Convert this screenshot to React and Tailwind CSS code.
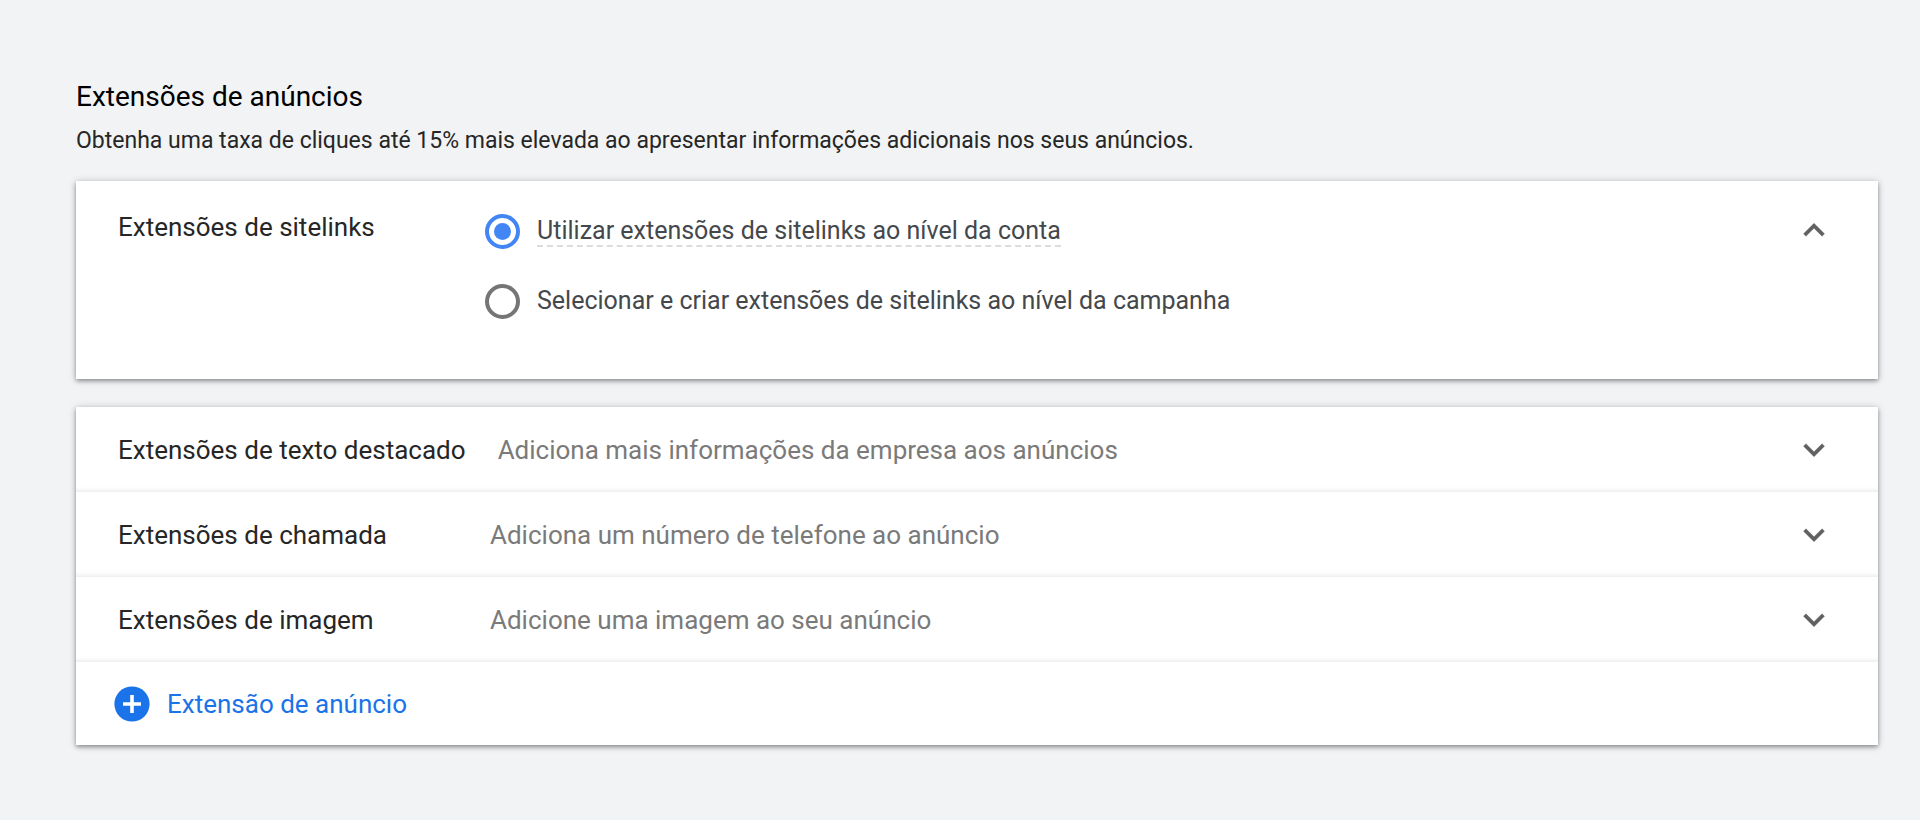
// src/App.jsx
import { useState } from 'react';

const SITELINK_OPTIONS = [
  { id: 'account', label: 'Utilizar extensões de sitelinks ao nível da conta', hint: true },
  { id: 'campaign', label: 'Selecionar e criar extensões de sitelinks ao nível da campanha', hint: false },
];

const EXTENSIONS = [
  { id: 'callout', title: 'Extensões de texto destacado', summary: 'Adiciona mais informações da empresa aos anúncios' },
  { id: 'call', title: 'Extensões de chamada', summary: 'Adiciona um número de telefone ao anúncio' },
  { id: 'image', title: 'Extensões de imagem', summary: 'Adicione uma imagem ao seu anúncio' },
];

const CARD = 'bg-white shadow-[0_1px_8px_rgba(0,0,0,0.2),0_2px_4px_rgba(0,0,0,0.32)]';

const Chevron = ({ up = false }) => (
  <svg
    viewBox="0 0 24 24"
    className={up ? 'size-[42px] rotate-180' : 'size-[42px]'}
    fill="#616161"
    aria-hidden="true"
  >
    <path d="M7.41 8.42 12 13.01l4.59-4.59L18 9.83l-6 6-6-6z" stroke="#616161" strokeWidth="0.2" />
  </svg>
);

const RadioOption = ({ option, checked, onSelect }) => (
  <label className="flex cursor-pointer items-center gap-[17px]">
    <input
      type="radio"
      name="sitelinks"
      value={option.id}
      checked={checked}
      onChange={() => onSelect(option.id)}
      className="grid size-[35px] shrink-0 appearance-none place-content-center rounded-full border-4 border-[#757575] before:size-[17px] before:rounded-full checked:border-[#4285f4] checked:before:bg-[#4285f4]"
    />
    <span
      className={
        option.hint
          ? 'border-b-2 border-dashed border-[#dadce0] text-[25px] leading-7'
          : 'border-b-2 border-transparent text-[25px] leading-7'
      }
    >
      {option.label}
    </span>
  </label>
);

const ExtensionRow = ({ title, summary }) => (
  <button
    type="button"
    className="flex h-[85px] w-full cursor-pointer items-center pr-[43px] pl-[42px] text-left text-[26px] leading-8 shadow-[inset_0_-5px_5px_-4px_rgba(0,0,0,0.1)]"
  >
    <span className="min-w-[372px] pr-8 text-[#262626]">{title}</span>
    <span className="flex-1 text-[#7a7a7a]">{summary}</span>
    <Chevron />
  </button>
);

export default function App() {
  const [sitelinks, setSitelinks] = useState('account');

  return (
    <main className="min-h-screen bg-[#f1f3f4] pt-[77px] pr-[42px] pb-16 pl-[76px] font-['Roboto',sans-serif]">
      <h1 className="text-[28px] leading-10 text-black">Extensões de anúncios</h1>
      <p className="mt-2 text-[23px] leading-8 text-[#262626]">
        Obtenha uma taxa de cliques até 15% mais elevada ao apresentar informações adicionais nos seus anúncios.
      </p>

      <section className={`mt-6 flex items-start pt-7 pr-[43px] pb-[60px] pl-[42px] ${CARD}`}>
        <h2 className="w-[367px] shrink-0 text-[26px] leading-9 text-[#262626]">Extensões de sitelinks</h2>
        <div
          role="radiogroup"
          aria-label="Extensões de sitelinks"
          className="flex flex-1 flex-col gap-[35px] pt-[5px] text-[#44484c]"
        >
          {SITELINK_OPTIONS.map((option) => (
            <RadioOption
              key={option.id}
              option={option}
              checked={sitelinks === option.id}
              onSelect={setSitelinks}
            />
          ))}
        </div>
        <button type="button" aria-label="Recolher" className="cursor-pointer">
          <Chevron up />
        </button>
      </section>

      <section className={`mt-7 ${CARD}`}>
        {EXTENSIONS.map((extension) => (
          <ExtensionRow key={extension.id} title={extension.title} summary={extension.summary} />
        ))}
        <button
          type="button"
          className="flex h-[83px] w-full cursor-pointer items-center gap-[17px] pl-[38px] text-[26px] leading-8 text-[#1a73e8]"
        >
          <svg viewBox="0 0 36 36" className="size-9" aria-hidden="true">
            <circle cx="18" cy="18" r="17.6" fill="#1a73e8" />
            <path d="M18 9v18M9 18h18" stroke="#fff" strokeWidth="3.6" />
          </svg>
          Extensão de anúncio
        </button>
      </section>
    </main>
  );
}
